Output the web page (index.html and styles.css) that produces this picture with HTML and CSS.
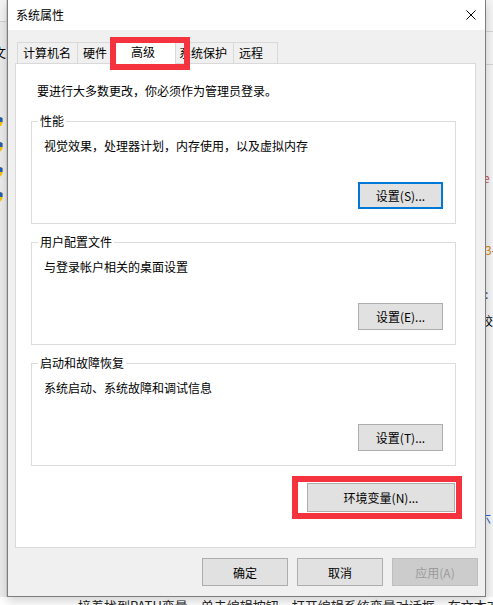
FILE: index.html
```html
<!DOCTYPE html>
<html lang="zh-CN">

<head>
    <meta charset="UTF-8">
    <meta name="viewport" content="width=device-width, initial-scale=1.0">
    <title>系统属性</title>
    <link rel="stylesheet" href="styles.css">
</head>

<body>
    <div class="screen">
        <!-- window behind, left edge -->
        <div class="bg-left">
            <div class="bg-left-top"></div>
            <div class="bg-left-char">文</div>
            <div class="shields">
                <svg class="shield" viewBox="0 0 12 14"><path d="M6 0.5 L11.5 2.5 V7 C11.5 10.5 9 12.5 6 13.5 C3 12.5 0.5 10.5 0.5 7 V2.5 Z" fill="#f5c400"/><path d="M6 0.5 L11.5 2.5 V7 H6 Z M6 7 H0.5 C0.5 10.5 3 12.5 6 13.5 Z" fill="#1f5fbf"/></svg>
                <svg class="shield" viewBox="0 0 12 14"><path d="M6 0.5 L11.5 2.5 V7 C11.5 10.5 9 12.5 6 13.5 C3 12.5 0.5 10.5 0.5 7 V2.5 Z" fill="#f5c400"/><path d="M6 0.5 L11.5 2.5 V7 H6 Z M6 7 H0.5 C0.5 10.5 3 12.5 6 13.5 Z" fill="#1f5fbf"/></svg>
                <svg class="shield" viewBox="0 0 12 14"><path d="M6 0.5 L11.5 2.5 V7 C11.5 10.5 9 12.5 6 13.5 C3 12.5 0.5 10.5 0.5 7 V2.5 Z" fill="#f5c400"/><path d="M6 0.5 L11.5 2.5 V7 H6 Z M6 7 H0.5 C0.5 10.5 3 12.5 6 13.5 Z" fill="#1f5fbf"/></svg>
                <svg class="shield" viewBox="0 0 12 14"><path d="M6 0.5 L11.5 2.5 V7 C11.5 10.5 9 12.5 6 13.5 C3 12.5 0.5 10.5 0.5 7 V2.5 Z" fill="#f5c400"/><path d="M6 0.5 L11.5 2.5 V7 H6 Z M6 7 H0.5 C0.5 10.5 3 12.5 6 13.5 Z" fill="#1f5fbf"/></svg>
            </div>
        </div>

        <div class="dialog">
            <div class="titlebar">
                <span class="title">系统属性</span>
                <svg class="close" width="10" height="10" viewBox="0 0 10 10">
                    <path d="M0.5 0.5 L9.5 9.5 M9.5 0.5 L0.5 9.5" stroke="#000" stroke-width="1" fill="none"/>
                </svg>
            </div>

            <div class="dialog-body">
                <div class="tabs">
                    <div class="tab tab-first">计算机名</div>
                    <div class="tab">硬件</div>
                    <div class="tab tab-active">高级<span class="mark mark-tab"></span></div>
                    <div class="tab">系统保护</div>
                    <div class="tab tab-last">远程</div>
                </div>

                <div class="panel">
                    <p class="intro">要进行大多数更改，你必须作为管理员登录。</p>

                    <fieldset class="group">
                        <legend>性能</legend>
                        <p class="group-text">视觉效果，处理器计划，内存使用，以及虚拟内存</p>
                        <div class="group-actions">
                            <button class="btn btn-focus">设置(S)...</button>
                        </div>
                    </fieldset>

                    <fieldset class="group">
                        <legend>用户配置文件</legend>
                        <p class="group-text">与登录帐户相关的桌面设置</p>
                        <div class="group-actions">
                            <button class="btn">设置(E)...</button>
                        </div>
                    </fieldset>

                    <fieldset class="group">
                        <legend>启动和故障恢复</legend>
                        <p class="group-text">系统启动、系统故障和调试信息</p>
                        <div class="group-actions">
                            <button class="btn">设置(T)...</button>
                        </div>
                    </fieldset>

                    <div class="env-row">
                        <div class="env-wrap">
                            <button class="btn btn-env">环境变量(N)...</button>
                            <span class="mark mark-env"></span>
                        </div>
                    </div>
                </div>

                <div class="footer">
                    <button class="btn btn-footer">确定</button>
                    <button class="btn btn-footer">取消</button>
                    <button class="btn btn-footer" disabled>应用(A)</button>
                </div>
            </div>
        </div>

        <!-- window behind, right edge -->
        <div class="bg-right">
            <div class="bg-right-line"></div>
            <div class="bg-right-line bg-right-line2"></div>
            <span class="frag frag-e">e</span>
            <span class="frag frag-3"><b>3</b>-</span>
            <span class="frag frag-colon">:</span>
            <span class="frag frag-xiao">校</span>
            <span class="frag frag-blue">六</span>
        </div>

        <!-- article text under the dialog -->
        <div class="bg-bottom">
            <span class="rule"></span>
            <span class="rule"></span>
            <span class="bg-bottom-text">接着找到PATH变量，单击编辑按钮，打开编辑系统变量对话框，在文本对话框中</span>
        </div>
    </div>
</body>

</html>
```

FILE: styles.css
```css
* {
    margin: 0;
    padding: 0;
    box-sizing: border-box;
}

body {
    width: 493px;
    height: 605px;
    overflow: hidden;
    background: #ffffff;
    font-family: "Noto Sans CJK SC", "Noto Sans", sans-serif;
    font-size: 12px;
    line-height: 16px;
    color: #000;
}

.screen {
    display: grid;
    grid-template-columns: 7px 479px 7px;
    grid-template-rows: 597px 8px;
    height: 605px;
}

/* ---------- background windows ---------- */

.bg-left {
    background: #ececec;
    border-right: 1px solid #d6d6d6;
    overflow: hidden;
}

.bg-left-top {
    height: 22px;
    background: #f3f3f3;
    border-bottom: 1px solid #d0d0d0;
}

.bg-left-char {
    margin: 22px 0 0 -7px;
    font-size: 13px;
    line-height: 16px;
}

.shields {
    display: flex;
    flex-direction: column;
    gap: 11px;
    margin: 55px 0 0 -8px;
}

.shield {
    width: 11px;
    height: 14px;
}

.bg-right {
    position: relative;
    background: #f4f4f4;
    overflow: hidden;
}

.bg-right-line {
    height: 32px;
    border-bottom: 1px solid #d4d4d4;
}

.bg-right-line2 {
    height: 33px;
}

.frag {
    position: absolute;
    left: -1px;
    font-size: 12px;
    line-height: 14px;
}

.frag-e {
    top: 171px;
    color: #c0504d;
    left: -3px;
}

.frag-3 {
    top: 243px;
}

.frag-3 b {
    font-weight: normal;
    color: #d08000;
}

.frag-colon {
    top: 287px;
    color: #1f3f7f;
}

.frag-xiao {
    top: 314px;
    left: -5px;
}

.frag-blue {
    top: 511px;
    left: -7px;
    color: #2a6ad0;
}

.bg-bottom {
    grid-column: 1 / 4;
    display: flex;
    align-items: flex-start;
    overflow: hidden;
    background: #fff;
}

.rule {
    width: 1px;
    height: 8px;
    margin-top: 3px;
    background: #555;
    margin-left: 55px;
}

.rule + .rule {
    margin-left: 16px;
}

.bg-bottom-text {
    margin-left: 7px;
    font-size: 13px;
    line-height: 17px;
    white-space: nowrap;
    color: #222;
}

/* ---------- dialog ---------- */

.dialog {
    display: flex;
    flex-direction: column;
    background: #f0f0f0;
    border: 1px solid #7d7d7d;
    border-top: none;
    box-shadow: 0 4px 10px rgba(0, 0, 0, 0.18);
    z-index: 1;
}

.titlebar {
    display: flex;
    align-items: center;
    justify-content: space-between;
    height: 31px;
    padding: 0 9px 0 8px;
    background: #fff;
}

.dialog-body {
    flex: 1;
    padding: 10px 7px 10px 7px;
}

/* tabs */

.tabs {
    display: flex;
    align-items: flex-end;
    height: 23px;
    margin-left: 2px;
}

.tab {
    height: 21px;
    padding: 0 6px 0 5px;
    margin-left: -1px;
    border: 1px solid #d9d9d9;
    border-bottom: none;
    background: #f0f0f0;
    line-height: 19px;
    white-space: nowrap;
}

.tab-first {
    margin-left: 0;
}

.tab-active {
    position: relative;
    z-index: 2;
    width: 65px;
    height: 24px;
    margin: 0 -2px -1px -3px;
    background: #fff;
    text-align: center;
    line-height: 21px;
}

.tab-last {
    padding-right: 14px;
}

/* red annotation boxes */

.mark {
    position: absolute;
    border: 6px solid #f5333f;
    z-index: 3;
}

.mark-tab {
    left: -2px;
    top: -4px;
    width: 80px;
    height: 33px;
}

.mark-env {
    left: -15px;
    top: -7px;
    right: -7px;
    bottom: -7px;
}

/* panel */

.panel {
    height: 485px;
    margin-right: 2px;
    background: #fff;
    border: 1px solid #d9d9d9;
    padding-top: 19px;
}

.intro {
    padding-left: 21px;
}

.group {
    margin: 14px 19px 0 15px;
    padding: 0 12px 14px;
    border: 1px solid #dcdcdc;
    min-inline-size: 0;
}

.group + .group {
    margin-top: 10px;
}

.group legend {
    margin-left: -6px;
    padding: 0 2px;
    line-height: 16px;
}

.group-text {
    margin-top: 9px;
    padding-left: 0;
}

.group-actions {
    display: flex;
    justify-content: flex-end;
    margin-top: 28px;
}

.btn {
    width: 85px;
    height: 27px;
    background: #e1e1e1;
    border: 1px solid #adadad;
    font-family: inherit;
    font-size: 12px;
    color: #000;
}

.btn-focus {
    border: 2px solid #0078d7;
}

.env-row {
    display: flex;
    justify-content: flex-end;
    margin: 17px 20px 0 0;
}

.env-wrap {
    position: relative;
}

.btn-env {
    width: 148px;
    height: 29px;
}

.footer {
    display: flex;
    justify-content: flex-end;
    gap: 9px;
    margin-top: 10px;
}

.btn-footer {
    width: 86px;
    height: 28px;
}

.btn-footer:disabled {
    background: #cccccc;
    border-color: #bfbfbf;
    color: #9a9a9a;
}
```
